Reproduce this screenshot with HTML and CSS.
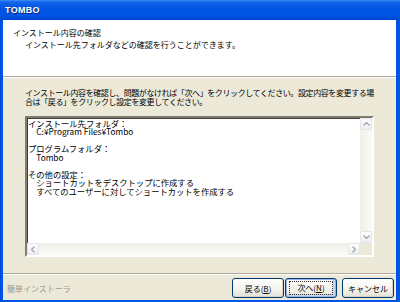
FILE: index.html
```html
<!DOCTYPE html>
<html lang="ja">
<head>
<meta charset="utf-8">
<title>TOMBO</title>
<link rel="stylesheet" href="styles.css">
</head>
<body>
<div class="window">
  <div class="titlebar"><span class="title">TOMBO</span></div>
  <div class="frame">
    <div class="client">
      <div class="header">
        <div class="heading">インストール内容の確認</div>
        <div class="subheading">インストール先フォルダなどの確認を行うことができます。</div>
      </div>
      <div class="main">
<p class="desc">インストール内容を確認し、問題がなければ「次へ」をクリックしてください。設定内容を変更する場
合は「戻る」をクリックし設定を変更してください。</p>
        <div class="textbox">
          <div class="textrow">
<div class="content">インストール先フォルダ：
　C:¥Program Files¥Tombo

プログラムフォルダ：
　Tombo

その他の設定：
　ショートカットをデスクトップに作成する
　すべてのユーザーに対してショートカットを作成する</div>
            <div class="vscroll">
              <div class="sbtn"><svg width="7" height="4" viewBox="0 0 7 4"><path d="M0.5 3.5 L3.5 0.5 L6.5 3.5" fill="none" stroke="#9aa3b5" stroke-width="1.2"/></svg></div>
              <div class="track"></div>
              <div class="sbtn"><svg width="7" height="4" viewBox="0 0 7 4"><path d="M0.5 0.5 L3.5 3.5 L6.5 0.5" fill="none" stroke="#9aa3b5" stroke-width="1.2"/></svg></div>
            </div>
          </div>
          <div class="hscroll">
            <div class="sbtn"><svg width="4" height="7" viewBox="0 0 4 7"><path d="M3.5 0.5 L0.5 3.5 L3.5 6.5" fill="none" stroke="#9aa3b5" stroke-width="1.2"/></svg></div>
            <div class="htrack"></div>
            <div class="sbtn"><svg width="4" height="7" viewBox="0 0 4 7"><path d="M0.5 0.5 L3.5 3.5 L0.5 6.5" fill="none" stroke="#9aa3b5" stroke-width="1.2"/></svg></div>
            <div class="corner"></div>
          </div>
        </div>
      </div>
      <div class="footer">
        <span class="brand">簡単インストーラ</span>
        <div class="buttons">
          <button class="btn">戻る(<u>B</u>)</button>
          <button class="btn default"><span class="focus">次へ(<u>N</u>)</span></button>
          <button class="btn cancel">キャンセル</button>
        </div>
      </div>
    </div>
  </div>
</div>
</body>
</html>
```
FILE: styles.css
```css
* { box-sizing: border-box; }
html, body {
  margin: 0;
  padding: 0;
  width: 400px;
  height: 302px;
  overflow: hidden;
  background: #0055e5;
}
body {
  font-family: "Noto Sans CJK JP", "Liberation Sans", sans-serif;
  font-size: 8px;
  color: #000;
}
.window {
  width: 400px;
  height: 302px;
  display: flex;
  flex-direction: column;
  background: #0055e5;
}
.titlebar {
  height: 20px;
  flex: none;
  display: flex;
  align-items: center;
  padding-left: 5px;
  background: linear-gradient(#3d8ff5 0px, #1465ea 2px, #0a5be6 5px, #0054e3 10px, #0055e8 15px, #0049d6 19px, #003fc2 20px);
}
.title {
  font-family: "Liberation Sans", sans-serif;
  font-weight: bold;
  font-size: 9px;
  color: #fff;
  letter-spacing: 0.3px;
  text-shadow: 1px 1px 0 #0a2a80;
}
.frame {
  flex: 1;
  display: flex;
  padding: 0 4px 2px 3px;
  background: linear-gradient(90deg, #0048d8 0, #0058ea 2px, #0055e5 3px);
}
.client {
  flex: 1;
  display: flex;
  flex-direction: column;
  background: #ece9d8;
}
.header {
  height: 57px;
  flex: none;
  background: #fff;
  padding: 8px 0 0 10px;
  border-bottom: 1px solid #aca899;
  box-shadow: 0 1px 0 #fff;
  line-height: 10px;
}
.subheading {
  margin-top: 2px;
  padding-left: 12px;
}
.main {
  flex: 1;
  padding: 11px 22px 0 22px;
  display: flex;
  flex-direction: column;
}
.desc {
  margin: 0;
  line-height: 9px;
  white-space: pre;
  letter-spacing: -0.4px;
}
.textbox {
  margin-top: 10px;
  height: 141px;
  border: 2px solid;
  border-color: #7f7c6f #ffffff #ffffff #7f7c6f;
  box-shadow: inset 1px 1px 0 #3f3e38;
  display: flex;
  flex-direction: column;
  background: #fff;
}
.textrow {
  flex: 1;
  display: flex;
  min-height: 0;
}
.content {
  flex: 1;
  padding: 1px 0 0 1px;
  font-size: 8.3px;
  line-height: 8.45px;
  white-space: pre;
  overflow: hidden;
}
.vscroll {
  width: 12px;
  flex: none;
  display: flex;
  flex-direction: column;
  background: #f6f5ef;
}
.track { flex: 1; background: linear-gradient(90deg, #f0efe8, #fbfbf8); }
.sbtn {
  width: 12px;
  height: 12px;
  flex: none;
  display: flex;
  align-items: center;
  justify-content: center;
  border: 1px solid #e2e4ea;
  border-radius: 2px;
  background: linear-gradient(#fdfdfd, #eeeef0);
}
.hscroll {
  height: 12px;
  flex: none;
  display: flex;
  background: #f6f5ef;
}
.htrack { flex: 1; background: linear-gradient(#f0efe8, #fbfbf8); }
.corner { width: 12px; background: #ece9d8; }
.footer {
  height: 27px;
  flex: none;
  margin-top: auto;
  border-top: 1px solid #aca899;
  box-shadow: inset 0 1px 0 #fff;
  display: flex;
  align-items: flex-end;
  justify-content: space-between;
  padding: 0 2px 2px 4px;
}
.brand {
  color: #9d9a8f;
  font-size: 8px;
  line-height: 10px;
  margin-bottom: 4px;
}
.buttons {
  display: flex;
}
.btn {
  width: 52px;
  height: 20px;
  margin: 0;
  padding: 0;
  font-family: "Noto Sans CJK JP", "Liberation Sans", sans-serif;
  font-size: 8px;
  color: #000;
  border: 1px solid #003c74;
  border-radius: 3px;
  background: linear-gradient(#ffffff, #f3f2ec 60%, #e3e1d5);
  box-shadow: inset -1px -1px 0 #d6d0c5;
  display: flex;
  align-items: center;
  justify-content: center;
}
.btn u { text-decoration: underline; }
.btn.default {
  margin-left: 1px;
  box-shadow: inset 0 0 0 1px #9ab3e6, inset -1px -1px 0 2px #c8d6f2;
}
.focus {
  border: 1px dotted #333;
  padding: 0 6px;
  line-height: 10px;
  width: 44px;
  height: 14px;
  display: flex;
  align-items: center;
  justify-content: center;
}
.btn.cancel { margin-left: 5px; }
```
